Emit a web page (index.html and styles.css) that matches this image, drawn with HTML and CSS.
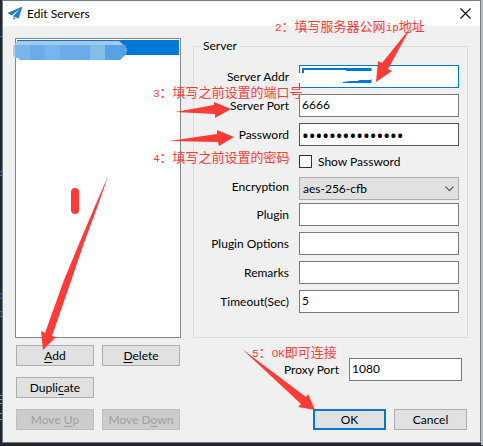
FILE: index.html
```html
<!DOCTYPE html>
<html lang="en">
<head>
<meta charset="utf-8">
<title>Edit Servers</title>
<link rel="stylesheet" href="styles.css">
</head>
<body>
<main class="dialog">
  <header class="titlebar">
    <svg class="app-icon" width="16" height="16" viewBox="0 0 16 16" aria-hidden="true">
      <path fill="#1d7fc4" d="M15.5 0.5 L0.5 7 L4.5 9.4 L13 3 L6 10.2 L11.6 12.6 Z M6 11 L6.6 14 L8.6 12.2 Z"/>
    </svg>
    <h1 class="title">Edit Servers</h1>
    <button class="close" type="button" aria-label="Close">
      <svg width="11" height="11" viewBox="0 0 11 11" aria-hidden="true"><path d="M0.5 0.5 L10.5 10.5 M10.5 0.5 L0.5 10.5" stroke="#111" stroke-width="1.2" fill="none"/></svg>
    </button>
  </header>
  <form class="content">
    <section class="left">
      <div class="server-list" role="listbox" aria-label="Servers">
        <div class="server-item" role="option" aria-selected="true"></div>
      </div>
      <div class="list-actions">
        <button class="btn" type="button"><span><u>A</u>dd</span></button>
        <button class="btn" type="button"><span><u>D</u>elete</span></button>
        <button class="btn first" type="button"><span>Dupli<u>c</u>ate</span></button>
        <button class="btn first" type="button" disabled><span>Move <u>U</u>p</span></button>
        <button class="btn" type="button" disabled><span>Move D<u>o</u>wn</span></button>
      </div>
    </section>
    <section class="right">
      <fieldset class="group">
        <legend>Server</legend>
        <div class="fields">
          <label for="addr">Server Addr</label><input class="box focused" id="addr" type="text">
          <label for="port">Server Port</label><input class="box" id="port" type="text" value="6666">
          <label for="pass">Password</label><input class="box secret" id="pass" type="password" value="aaaaaaaaaaaaaaa">
          <div class="check"><input id="show" type="checkbox"><label for="show">Show Password</label></div>
          <label for="enc">Encryption</label>
          <div class="select-wrap">
            <select id="enc"><option>aes-256-cfb</option></select>
            <svg class="chevron" width="9" height="6" viewBox="0 0 9 6" aria-hidden="true"><path d="M0.5 0.7 L4.5 4.7 L8.5 0.7" stroke="#555" stroke-width="1.2" fill="none"/></svg>
          </div>
          <label for="plugin">Plugin</label><input class="box" id="plugin" type="text">
          <label for="opts">Plugin Options</label><input class="box" id="opts" type="text">
          <label for="remarks">Remarks</label><input class="box" id="remarks" type="text">
          <label for="timeout">Timeout(Sec)</label><input class="box" id="timeout" type="text" value="5">
        </div>
      </fieldset>
      <div class="proxy">
        <label for="proxy">Proxy Port</label><input class="box" id="proxy" type="text" value="1080">
      </div>
      <div class="confirm">
        <button class="btn primary" type="button">OK</button>
        <button class="btn" type="button">Cancel</button>
      </div>
    </section>
  </form>
</main>
<svg class="marks" width="483" height="446" viewBox="0 0 483 446" aria-hidden="true">
  <g fill="none" stroke="#426a9f"><path d="M0 36.5h2M0 171.5h2v4h-2M0 293.5h2v5h-2M0 311.5h2v5h-2"/><path stroke="#8b9095" d="M0 395.5h2M0 399.5h2M0 403.5h2M0 413.5h2M0 419.5h2"/></g>
  <path fill="#a5c8e6" d="M17 41 H119 L125 46 H14 Z"/>
  <rect x="13" y="44" width="8" height="14" rx="4" fill="#b5cbdc"/>
  <path fill="#78b5ea" d="M15 45 H125 L127 50 L126 54 L120 60 H20 L15 56 Z"/>
  <path fill="#6badea" d="M30 45h15v15h-15zM60 45h30v15h-30z"/>
  <path fill="#84bcec" d="M90 45h15v15h-15z"/>
  <path fill="#55a3e6" d="M105 45h20l2 5l-1 4l-6 6h-15z"/>
  <path fill="#fff" d="M296 73 H301 V68 H372 V83 H296 Z"/>
  <path fill="#0078d7" d="M302 68 H371 V71 H346 V70 H304 V73 H302 Z M343 82 L350 81 H357 L360 80 H371 V83 H343 Z"/>
  <path fill="#e89a5c" d="M371 68h1v3h-1zM371 79h1v4h-1z"/>
  <g fill="#ff3b38">
    <rect x="71" y="188" width="8" height="26" rx="4"/>
    <path d="M108.500 175 L95 206 L81 239 L64 280 L45 333 L41 331 L43 350 L56 337 L52 336 L70 284 L84 243 L97 208 Z"/>
    <path d="M411 27 L388 69 L392 71 L376 82 L378 61 L382 63 Z"/>
    <path d="M175 112 L214 105 L214 102 L231 109 L215 118 L215 114 Z"/>
    <path d="M169 141 L217 134 L217 130 L234 137 L219 146 L218 142 Z"/>
    <path d="M242 349 L306 397 L308 394 L315 410 L298 407 L301 404 Z"/>
  </g>
</svg>
<p class="note note-addr"><span>2</span>：填写服务器公网<span>ip</span>地址</p>
<p class="note note-port"><span>3</span>：填写之前设置的端口号</p>
<p class="note note-pass"><span>4</span>：填写之前设置的密码</p>
<p class="note note-ok"><span>5</span>：<span>OK</span>即可连接</p>
</body>
</html>
```
FILE: styles.css
```css
* { box-sizing: border-box; }
html { background: #24272b; }
body {
  margin: 0;
  padding: 0 0 2px 2px;
  position: relative;
  border-right: 2px solid #b9bcbe;
  font: 12px/16px Lato, "Open Sans", sans-serif;
  color: #000;
}
.dialog { border: 1px solid #6f7d87; background: #f0f0f0; }
.titlebar {
  display: flex;
  align-items: center;
  gap: 4px;
  height: 25px;
  padding: 0 9px 0 4px;
  background: #fff;
}
.title { margin: 0; flex: 1; font-size: 12px; font-weight: 400; }
.close { display: flex; padding: 0; border: 0; background: none; }
.content {
  display: grid;
  grid-template-columns: 166px 1fr;
  gap: 12px;
  padding: 12px;
}
.server-list { height: 300px; padding: 1px; border: 1px solid #828790; background: #fff; }
.server-item { height: 15px; background: #0078d7; }
.list-actions {
  display: grid;
  grid-template-columns: 78px 78px;
  gap: 11px 8px;
  padding: 7px 1px 0;
}
.first { grid-column: 1; }
.btn {
  height: 21px;
  padding: 0;
  border: 1px solid #adadad;
  background: #e1e1e1;
  font: inherit;
  line-height: 18px;
  color: #000;
}
.btn u { text-underline-offset: 2px; }
.btn:disabled { border-color: #bfbfbf; background: #ccc; color: #a0a0a0; }
.primary { border: 2px solid #0078d7; line-height: 16px; }
.group {
  height: 300px;
  min-width: 0;
  margin: 0;
  padding: 11px 8px 0;
  border: 1px solid #dcdcdc;
}
.group legend { padding: 0 2px 0 1px; }
.fields {
  display: grid;
  grid-template-columns: 1fr 160px;
  grid-template-rows: 23px 23px 23px 19px 20px repeat(4, 23px);
  gap: 6px 10px;
  align-items: center;
}
.fields > label { text-align: right; }
.box {
  width: 100%;
  height: 23px;
  padding: 0 3px 2px 2px;
  border: 1px solid #7a7a7a;
  background: #fff;
  font: inherit;
  color: #000;
}
.focused { border-color: #0078d7; }
.secret { border-color: #555; padding-bottom: 0; font: 18px/20px "Noto Sans", sans-serif; }
.check { grid-column: 2; display: flex; align-items: center; gap: 6px; }
.check input {
  appearance: none;
  width: 13px;
  height: 13px;
  margin: 0;
  border: 1px solid #333;
  background: #fff;
}
.select-wrap { position: relative; height: 23px; align-self: start; }
select {
  appearance: none;
  width: 100%;
  height: 23px;
  padding: 0 20px 0 3px;
  border: 1px solid #adadad;
  border-radius: 0;
  background: #e1e1e1;
  font: inherit;
  color: #000;
}
.chevron { position: absolute; right: 5px; top: 9px; pointer-events: none; }
.proxy {
  display: flex;
  justify-content: flex-end;
  align-items: center;
  gap: 10px;
  padding: 20px 6px 28px 0;
}
.proxy .box { width: 113px; }
.confirm { display: flex; justify-content: flex-end; gap: 8px; padding-right: 1px; }
.confirm .btn { width: 73px; }
.marks { position: absolute; left: 0; top: 0; pointer-events: none; }
.note {
  position: absolute;
  margin: 0;
  font: 13px/16px "Noto Sans CJK SC", sans-serif;
  color: #ff3b38;
  white-space: nowrap;
}
.note span { font-family: "Liberation Mono", monospace; font-size: 11px; }
.note-addr { left: 275px; top: 18px; }
.note-port { left: 153px; top: 84px; }
.note-pass { left: 153px; top: 149px; }
.note-ok { left: 252px; top: 344px; }
```
